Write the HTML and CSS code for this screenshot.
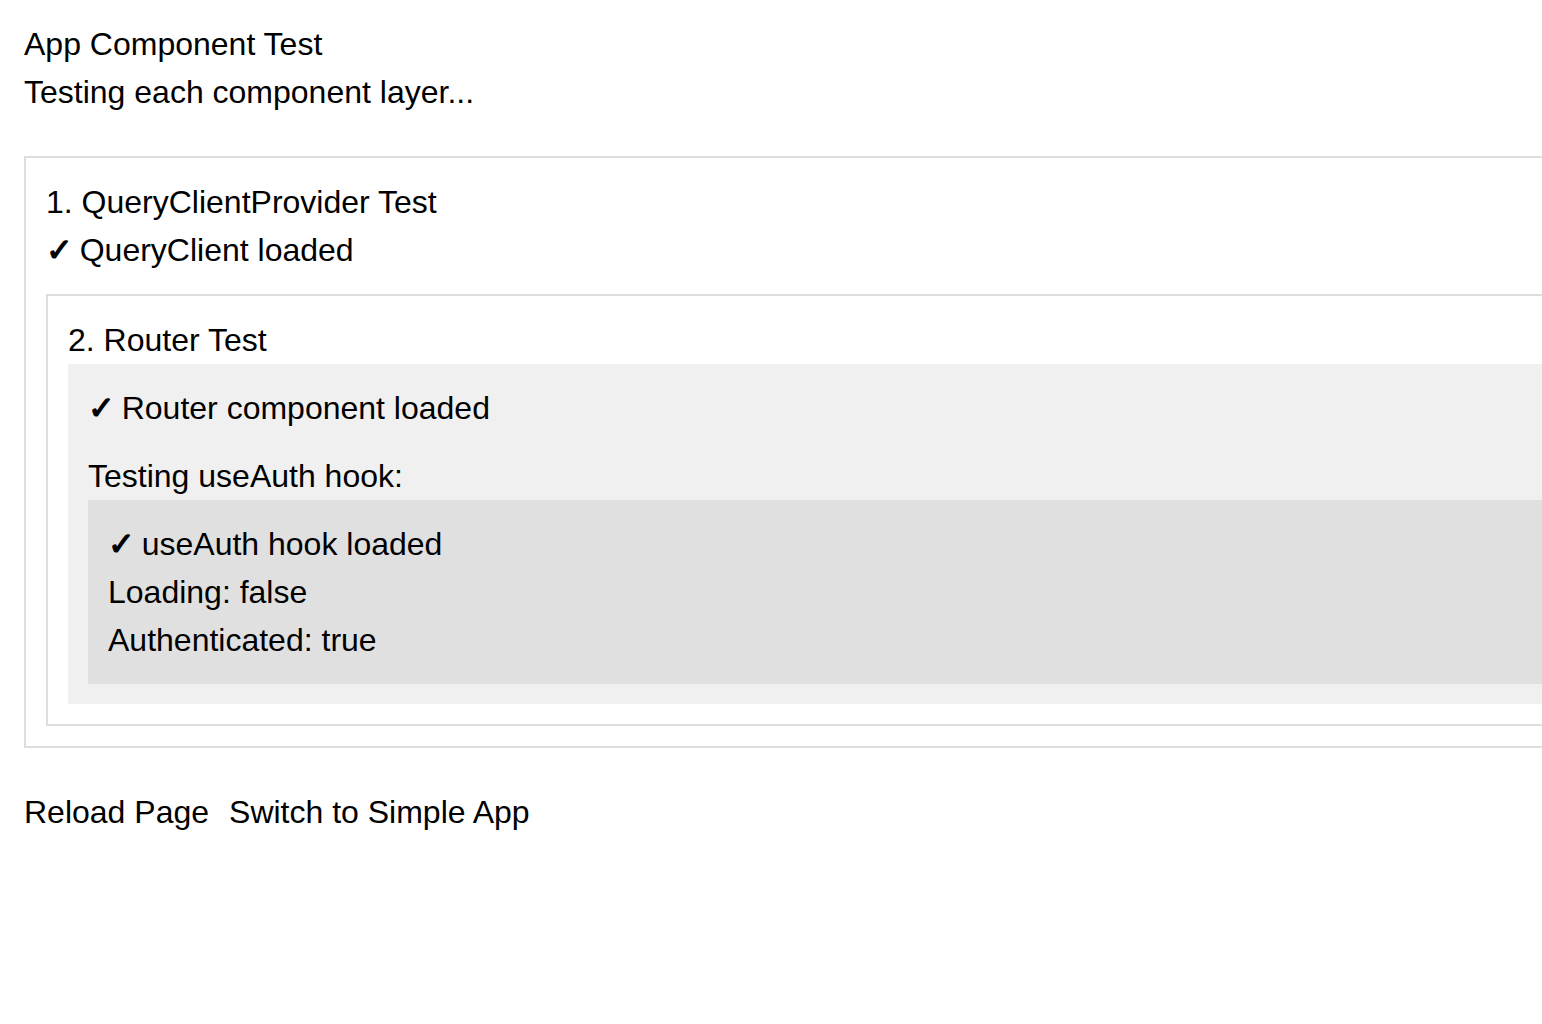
FILE: index.html
```html
<!DOCTYPE html>
<html lang="en">
<head>
<meta charset="utf-8">
<title>App Component Test</title>
<link rel="stylesheet" href="styles.css">
</head>
<body>
<div class="app">
  <div class="line">App Component Test</div>
  <div class="line">Testing each component layer...</div>
  <div class="box outer">
    <div class="line">1. QueryClientProvider Test</div>
    <div class="line"><span class="check">✓</span> QueryClient loaded</div>
    <div class="box inner">
      <div class="line">2. Router Test</div>
      <div class="panel light">
        <div class="line spaced"><span class="check">✓</span> Router component loaded</div>
        <div class="line">Testing useAuth hook:</div>
        <div class="panel dark">
          <div class="line"><span class="check">✓</span> useAuth hook loaded</div>
          <div class="line">Loading: false</div>
          <div class="line">Authenticated: true</div>
        </div>
      </div>
    </div>
  </div>
  <div class="actions">
    <button class="btn" type="button">Reload Page</button>
    <button class="btn" type="button">Switch to Simple App</button>
  </div>
</div>
</body>
</html>
```
FILE: styles.css
```css
html, body {
  margin: 0;
  padding: 0;
  background: #fff;
}
body {
  overflow: hidden;
  font-family: "Liberation Sans", Arial, "DejaVu Sans", sans-serif;
  font-size: 32px;
  line-height: 48px;
  color: #000;
}
.app {
  width: 1700px;
  padding: 20px 0 0 24px;
}
.line {
  white-space: nowrap;
}
.check {
  font-family: "DejaVu Sans", sans-serif;
  -webkit-text-stroke: 1.2px #000;
  margin-right: -2px;
}
.box {
  border: 2px solid #ddd;
  padding: 20px;
}
.outer {
  margin: 40px 0;
}
.inner {
  margin-top: 20px;
}
.panel {
  padding: 20px;
}
.light {
  background: #f0f0f0;
}
.dark {
  background: #e0e0e0;
}
.spaced {
  margin-bottom: 20px;
}
.actions {
  display: flex;
  gap: 20px;
}
.btn {
  font: inherit;
  line-height: 48px;
  color: #000;
  background: none;
  border: none;
  padding: 0;
  margin: 0;
  cursor: pointer;
}
```
